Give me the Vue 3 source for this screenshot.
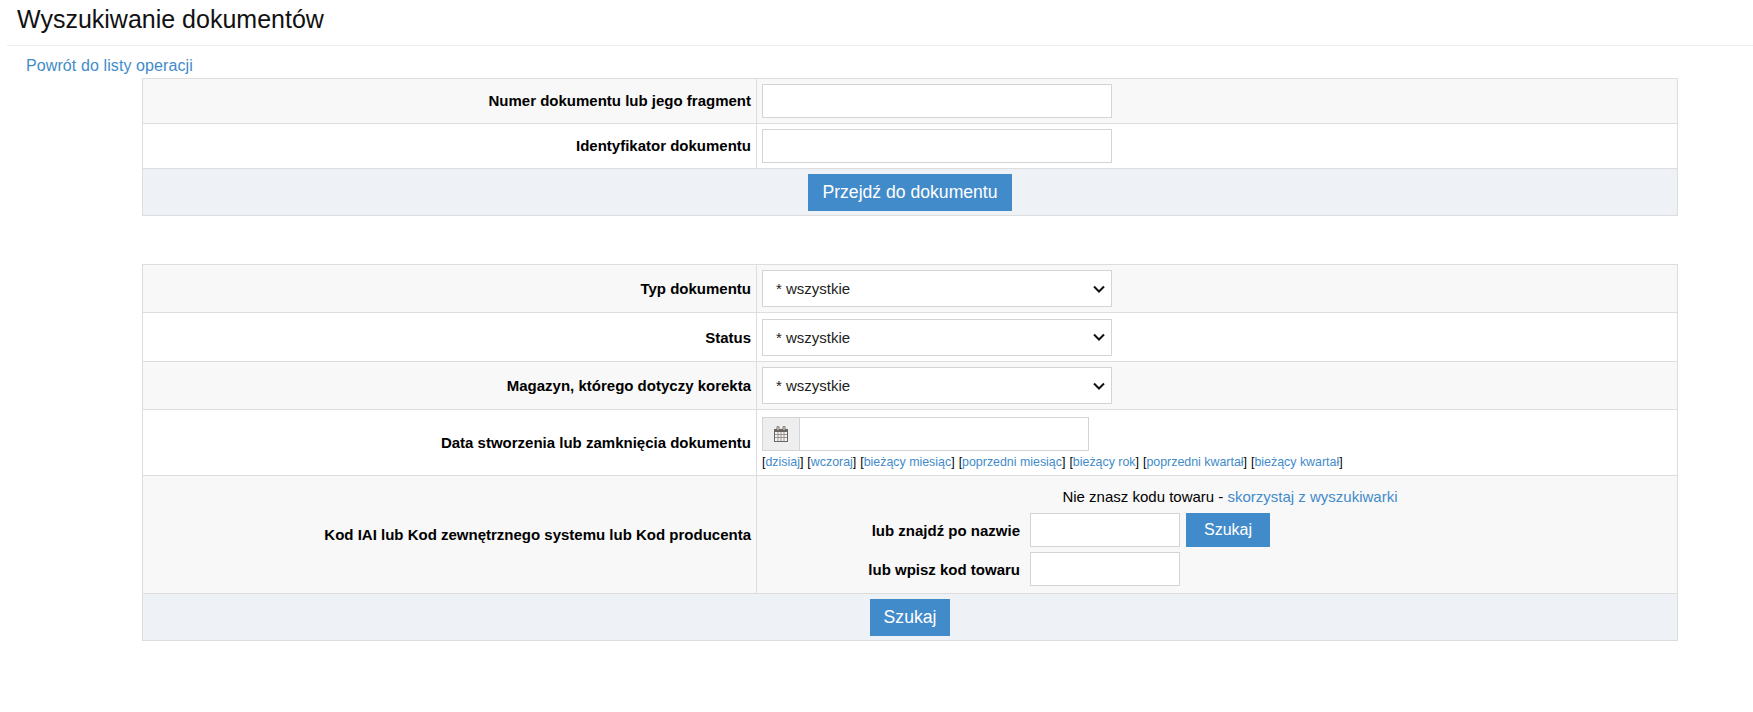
<template>
  <div class="page">
    <h1 class="title">Wyszukiwanie dokumentów</h1>
    <a class="back" href="#">Powrót do listy operacji</a>

    <table class="form-table first">
      <tbody>
        <tr class="odd row-input">
          <th>Numer dokumentu lub jego fragment</th>
          <td><input class="text wide" type="text" /></td>
        </tr>
        <tr class="row-input">
          <th>Identyfikator dokumentu</th>
          <td><input class="text wide" type="text" /></td>
        </tr>
        <tr class="actions">
          <td colspan="2"><button class="btn large" type="button">Przejdź do dokumentu</button></td>
        </tr>
      </tbody>
    </table>

    <table class="form-table second">
      <tbody>
        <tr v-for="(row, i) in selects" :key="row" class="row-select" :class="{ odd: i % 2 === 0 }">
          <th>{{ row }}</th>
          <td>
            <select class="select">
              <option>* wszystkie</option>
            </select>
          </td>
        </tr>
        <tr class="row-date">
          <th>Data stworzenia lub zamknięcia dokumentu</th>
          <td>
            <div class="date-group">
              <span class="addon">
                <svg viewBox="0 0 16 18" width="16" height="18">
                  <path fill="#6b6560" d="M1 4h2.500V2.500a1.500 1.500 0 0 1 3 0V4h3V2.500a1.500 1.500 0 0 1 3 0V4H15v13H1z" />
                  <path fill="#eee" d="M4.500 2h1v3h-1zM10.500 2h1v3h-1z" />
                  <path fill="#f3f3f3" d="M2 7h12v9H2z" />
                  <path stroke="#9a9490" stroke-width="1" d="M2 9.500h12M2 12.500h12M5 7v9M8 7v9M11 7v9" fill="none" />
                </svg>
              </span>
              <input class="date-input" type="text" />
            </div>
            <div class="quick-links">
              <span v-for="link in dateLinks" :key="link">[<a href="#">{{ link }}</a>]</span>
            </div>
          </td>
        </tr>
        <tr class="odd">
          <th>Kod IAI lub Kod zewnętrznego systemu lub Kod producenta</th>
          <td class="code-cell">
            <div class="hint">Nie znasz kodu towaru - <a href="#">skorzystaj z wyszukiwarki</a></div>
            <div class="code-row">
              <label>lub znajdź po nazwie</label>
              <input class="text short" type="text" />
              <button class="btn" type="button">Szukaj</button>
            </div>
            <div class="code-row">
              <label>lub wpisz kod towaru</label>
              <input class="text short" type="text" />
            </div>
          </td>
        </tr>
        <tr class="actions">
          <td colspan="2"><button class="btn large" type="button">Szukaj</button></td>
        </tr>
      </tbody>
    </table>
  </div>
</template>

<script setup>
const selects = ['Typ dokumentu', 'Status', 'Magazyn, którego dotyczy korekta']
const dateLinks = [
  'dzisiaj',
  'wczoraj',
  'bieżący miesiąc',
  'poprzedni miesiąc',
  'bieżący rok',
  'poprzedni kwartał',
  'bieżący kwartał'
]
</script>

<style>
html,
body {
  margin: 0;
  background: #fff;
}
</style>

<style scoped>
.page {
  font-family: 'Liberation Sans', Arial, sans-serif;
  font-size: 15px;
  color: #000;
  min-height: 712px;
  box-sizing: border-box;
}

.title {
  margin: 0 0 0 7px;
  padding: 6px 0 0 10px;
  height: 46px;
  box-sizing: border-box;
  border-bottom: 1px solid #eee;
  font-size: 25px;
  font-weight: 400;
  line-height: 27px;
  color: #111;
}

.back {
  display: block;
  margin-left: 26px;
  height: 32px;
  padding-top: 11px;
  box-sizing: border-box;
  font-size: 16px;
  letter-spacing: 0.1px;
  line-height: 18px;
  color: #428bca;
  text-decoration: none;
}

a {
  color: #428bca;
  text-decoration: none;
}

.form-table {
  width: 1536px;
  margin-left: 142px;
  border-collapse: collapse;
  table-layout: fixed;
}

.first {
  margin-bottom: 48px;
}

.form-table th,
.form-table td {
  border: 1px solid #ddd;
  padding: 0 5px;
}

.form-table th {
  width: 603px;
  text-align: right;
  font-weight: 700;
  font-size: 15px;
}

.odd th,
.odd td {
  background: #f8f8f8;
}

.row-input th,
.row-input td {
  height: 44px;
}

.form-table .row-input th {
  height: 42px;
  padding-bottom: 2px;
}

.row-select th,
.row-select td {
  height: 47px;
}

.row-select:nth-child(2) th,
.row-select:nth-child(2) td {
  height: 48px;
}

.row-date th,
.row-date td {
  height: 65px;
}

.actions td {
  background: #eef1f6;
  text-align: center;
  height: 46px;
}

.text {
  display: block;
  box-sizing: border-box;
  height: 34px;
  border: 1px solid #d4d4d4;
  background: #fff;
  outline: none;
  padding: 0 8px;
  font: inherit;
}

.wide {
  width: 350px;
}

.short {
  width: 150px;
}

.select {
  display: block;
  box-sizing: border-box;
  width: 350px;
  height: 37px;
  border: 1px solid #d4d4d4;
  border-radius: 0;
  appearance: none;
  background: #fff url("data:image/svg+xml,%3Csvg xmlns='http://www.w3.org/2000/svg' width='12' height='8' viewBox='0 0 12 8'%3E%3Cpath d='M1 1.500l5 5 5-5' fill='none' stroke='%23111' stroke-width='2'/%3E%3C/svg%3E") no-repeat right 6px center;
  padding: 0 13px;
  font-family: inherit;
  font-size: 15px;
  color: #222;
}

.date-group {
  display: flex;
  width: 327px;
  height: 34px;
  box-sizing: border-box;
  border: 1px solid #d4d4d4;
}

.addon {
  display: flex;
  align-items: center;
  justify-content: center;
  width: 36px;
  flex-shrink: 0;
  background: #eee;
  border-right: 1px solid #d4d4d4;
}

.date-input {
  flex: 1;
  min-width: 0;
  border: 0;
  outline: none;
  background: #fff;
}

.quick-links {
  display: flex;
  gap: 4px;
  margin-top: 4px;
  font-size: 12.4px;
  line-height: 14px;
}

.code-cell {
  height: 105px;
  vertical-align: top;
  padding-top: 12px !important;
}

.hint {
  padding-left: 26px;
  text-align: center;
  line-height: 17px;
  margin-bottom: 8px;
}

.code-row {
  display: grid;
  grid-template-columns: 258px 150px auto;
  justify-content: start;
  align-items: center;
  column-gap: 10px;
  margin-bottom: 5px;
}

.code-row label {
  text-align: right;
  font-weight: 700;
}

.code-row .btn {
  margin-left: -4px;
  justify-self: start;
  padding: 0 17px;
}

.btn {
  border: 1px solid #428bca;
  background: #428bca;
  color: #fff;
  font-family: inherit;
  font-size: 16px;
  height: 34px;
  padding: 0 13px;
  border-radius: 0;
}

.large {
  height: 37px;
  font-size: 17.6px;
  padding: 0 13px;
  vertical-align: middle;
}
</style>
